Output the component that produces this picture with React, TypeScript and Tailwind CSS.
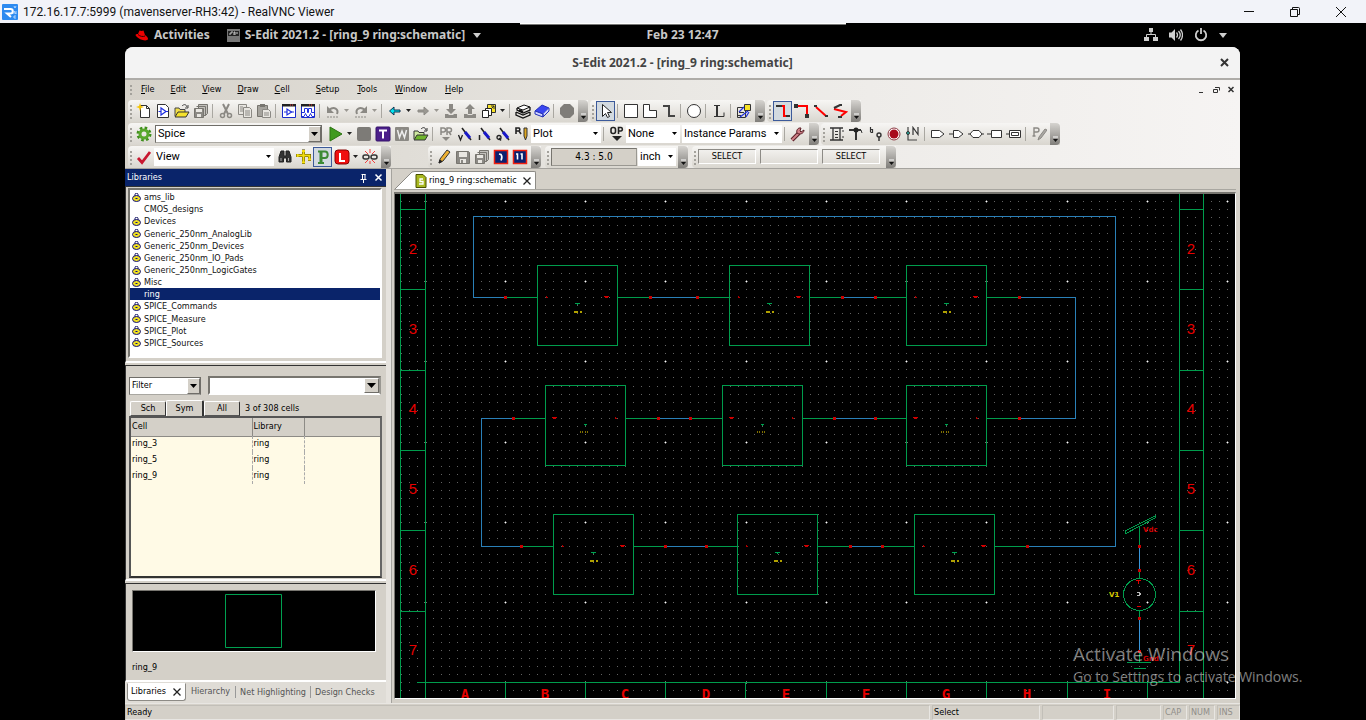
import React from "react";

const UI = "font-['DejaVu_Sans_Condensed','DejaVu_Sans','Noto_Sans',sans-serif] text-[9px]";

type Kids = { children?: React.ReactNode };

function Glyph({ children, size = 16 }: Kids & { size?: number }) {
  return (
    <svg width={size} height={size} viewBox="0 0 16 16" fill="none" stroke="#222" strokeWidth="1" aria-hidden="true" className="shrink-0">
      {children}
    </svg>
  );
}

/* ---------- toolbar icons ---------- */

const G = "#8b8984";

const page = (
  <>
    <path d="M4.5 2.5h6l3 3v9h-9z" fill="#fff" stroke="#333" />
    <path d="M10.5 2.5v3h3" stroke="#333" />
  </>
);

const icons: Record<string, React.ReactNode> = {
  new: (
    <>
      {page}
      <path d="M4 0l1 3 3 1-3 1-1 3-1-3-3-1 3-1z" fill="#f5c400" stroke="none" />
    </>
  ),
  view: (
    <>
      <path d="M2.500 1.500h8l3 3v10h-11z" fill="#fff" stroke="#333" />
      <path d="M6 5v7l5-3.500z" stroke="#2030e0" strokeWidth="1.200" />
      <path d="M3.500 8.500H6M11 8.500h2" stroke="#2030e0" strokeWidth="1.200" />
    </>
  ),
  open: (
    <>
      <path d="M1 13V5h4l1 1.500h5V9" fill="#f3e04a" stroke="#444" />
      <path d="M1 14l3-5h11l-3 5z" fill="#f5e22c" stroke="#333" />
      <path d="M8 3c2-2 4-2 5 1m1-2v3h-3" stroke="#444" />
    </>
  ),
  openGreen: (
    <>
      <path d="M1 13V5h4l1 1.500h5V9" fill="#cfe8a0" stroke="#333" />
      <path d="M1 14l3-5h11l-3 5z" fill="#6fb52c" stroke="#333" />
      <path d="M8 3c2-2 4-2 5 1m1-2v3h-3" stroke="#333" />
    </>
  ),
  save: (
    <>
      <path d="M1.500 2.500h12l1 1v11h-13z" fill={G} stroke="#77756f" />
      <path d="M4 3h8v5H4zM5 10h6v4H5z" fill="#e9e7e2" stroke="none" />
      <path d="M6 11h2v3H6z" fill={G} stroke="none" />
    </>
  ),
  saveAll: (
    <>
      <path d="M5.500 1.500h9v9l-2 2h-7z" fill="#c2c0bb" stroke="#77756f" />
      <path d="M3.500 3.500h9v9" stroke="#77756f" />
      <path d="M1.500 5.500h9v9h-9z" fill={G} stroke="#77756f" />
      <path d="M3 6h6v3H3zM4 11h4v3H4z" fill="#e9e7e2" stroke="none" />
    </>
  ),
  cut: (
    <>
      <path d="M5 1l5 10M11 1L6 11" stroke={G} strokeWidth="2" />
      <circle cx="4.500" cy="12.500" r="2" stroke={G} strokeWidth="1.500" />
      <circle cx="11.500" cy="12.500" r="2" stroke={G} strokeWidth="1.500" />
    </>
  ),
  copy: (
    <>
      <path d="M1.500 1.500h8v10h-8z" fill="#e8e6e1" stroke={G} />
      <path d="M6.500 4.500h6l2 2v8h-8z" fill="#e8e6e1" stroke={G} />
      <path d="M3 4h3M3 6h3M3 8h3M8 8h5M8 10h5M8 12h5" stroke={G} />
    </>
  ),
  paste: (
    <>
      <path d="M1.500 2.500h10v11h-10z" fill="#a5a39d" stroke="#77756f" />
      <path d="M4 1h5v3H4z" fill="#77756f" stroke="none" />
      <path d="M6.500 6.500h6l2 2v6h-8z" fill="#e8e6e1" stroke={G} />
      <path d="M8 10h5M8 12h5" stroke={G} />
    </>
  ),
  symView: (
    <>
      <path d="M1.500 1.500h13v13h-13z" fill="#fff" stroke="#1a2acc" />
      <path d="M1 1h14v2.500H1z" fill="#222" stroke="none" />
      <path d="M9 2h1M11 2h1" stroke="#f04040" />
      <path d="M6 6v6l4.500-3z" stroke="#2030e0" strokeWidth="1.200" />
      <path d="M3 9h3M10 9h3" stroke="#2030e0" strokeWidth="1.200" />
    </>
  ),
  wave: (
    <>
      <path d="M1.500 1.500h13v13h-13z" fill="#fff" stroke="#1a2acc" />
      <path d="M1 1h14v2.500H1z" fill="#222" stroke="none" />
      <path d="M9 2h1M11 2h1" stroke="#f04040" />
      <path d="M2 9.500h2.500v-4h3v4h1v-4h3v4H14" stroke="#2030e0" />
      <path d="M2 13.500h2l1.500-3 1.500 3h2l1.500-3 1.500 3h2" stroke="#2030e0" />
    </>
  ),
  undo: (
    <>
      <path d="M12 11c2-5-3-8-8-4" stroke={G} strokeWidth="2" />
      <path d="M2 3v7h7z" fill={G} stroke="none" />
      <path d="M2 14h12" stroke={G} strokeDasharray="2 1" />
    </>
  ),
  redo: (
    <>
      <path d="M4 11c-2-5 3-8 8-4" stroke={G} strokeWidth="2" />
      <path d="M14 3v7H7z" fill={G} stroke="none" />
      <path d="M2 14h12" stroke={G} strokeDasharray="2 1" />
    </>
  ),
  back: <path d="M2.500 8l4.500-4v3h6v2H7v3z" fill="#00e5f0" stroke="#103050" />,
  forward: <path d="M13.500 8L9 4v3H3v2h6v3z" fill="#9a9892" stroke={G} />,
  pushIn: (
    <>
      <path d="M6 1h4v5h3l-5 5-5-5h3z" fill={G} stroke="none" />
      <path d="M2 11h3l1 1h4l1-1h3v4H2z" fill={G} stroke="none" />
    </>
  ),
  popOut: (
    <>
      <path d="M6 11V6H3l5-5 5 5h-3v5z" fill={G} stroke="none" />
      <path d="M2 11h3l1 1h4l1-1h3v4H2z" fill={G} stroke="none" />
    </>
  ),
  windows: (
    <>
      <path d="M6.500 1.500h8v8h-8z" fill="#f7e227" stroke="#333" />
      <path d="M9 7l4-4M10 3h3v3" stroke="#333" />
      <path d="M4.500 5.500h6v7h-6z" fill="#fff" stroke="#222" />
      <path d="M1.500 7.500h6v7h-6z" fill="#fff" stroke="#222" />
    </>
  ),
  books: (
    <>
      <path d="M2 5l7-3 6 2-7 3z" fill="#fff" stroke="#111" />
      <path d="M2 5v2l6 3 7-3V4M1 9l7 3 7-3M1 9v3l7 3 7-3V9" stroke="#111" strokeWidth="1.300" />
      <path d="M4 7l4 2" stroke="#111" strokeWidth="2" />
    </>
  ),
  book: (
    <>
      <path d="M1 8l7-6 7 3-6 6z" fill="#3a46f0" stroke="#2330b8" />
      <path d="M1 8v3l8 3v-3zM9 11v3l6-6V5" fill="#cfd3ff" stroke="#2330b8" />
    </>
  ),
  octagon: <path d="M5 1h6l4 4v6l-4 4H5l-4-4V5z" fill="#7f7d79" stroke="none" />,
  pointer: <path d="M4.500 1.500v12l3-3 2 4 2-1-2-4h4z" fill="#fff" stroke="#222" />,
  rect: <path d="M1.500 1.500h13v13h-13z" fill="#fff" stroke="#333" />,
  polygon: <path d="M1.500 1.500h6v6h7v7h-13z" fill="#fff" stroke="#333" />,
  wire: <path d="M2 3h6v10h6" stroke="#444" strokeWidth="2" />,
  circle: <circle cx="8" cy="8" r="6.500" fill="#fff" stroke="#333" />,
  label: (
    <>
      <path d="M3 2.500h6M3 13.500h10v-4" stroke="#333" />
      <path d="M6 2v12" stroke="#333" strokeWidth="2" />
    </>
  ),
  instance: (
    <>
      <path d="M1.500 4.500h8v10h-8z" stroke="#333" />
      <path d="M3 9.500h5M2 12.500h3" stroke="#333" />
      <path d="M8.500 1.500h6v6h-6z" fill="#f7e227" stroke="#333" />
      <path d="M3 9l5-5M4 14l8-6M10 14l3-5" stroke="#2030e0" strokeWidth="1.200" />
    </>
  ),
  wire90: (
    <>
      <path d="M1 3h7" stroke="#333" strokeWidth="2" />
      <path d="M7 3h2v10h3" stroke="#f00" strokeWidth="2" />
      <path d="M11 13h4" stroke="#333" strokeWidth="2" />
    </>
  ),
  wireCorner: (
    <>
      <path d="M1 3h12v9" stroke="#f00" strokeWidth="2" />
      <path d="M0 1h4v4H0zM11 11h4v4h-4z" fill="#333" stroke="none" />
    </>
  ),
  wire45: (
    <>
      <path d="M3 4l10 9" stroke="#f00" strokeWidth="2" />
      <path d="M1 3h3M12 13h3" stroke="#333" strokeWidth="2" />
    </>
  ),
  wireAny: (
    <>
      <path d="M2 6l12 3-5 4" stroke="#f00" strokeWidth="2" />
      <path d="M2 5l6-3h2M6 14h4" stroke="#333" strokeWidth="2" />
    </>
  ),
  gear: (
    <>
      <circle cx="8" cy="8" r="5.500" stroke="#3f8f1c" strokeWidth="4" strokeDasharray="2.300 2" />
      <circle cx="8" cy="8" r="4" stroke="#58a82c" strokeWidth="3" />
    </>
  ),
  play: <path d="M2 1l12 7-12 7z" fill="#3f9a1e" stroke="#2c7412" />,
  stop: <rect x="1" y="1" width="14" height="14" rx="2" fill="#7d7b77" stroke="none" />,
  T: (
    <>
      <rect x="1" y="1" width="14" height="14" rx="1" fill="#4b1f8a" stroke="#34126a" />
      <path d="M4 4.500h8M8 4.500v8" stroke="#fff" strokeWidth="2" />
    </>
  ),
  W: (
    <>
      <rect x="1" y="1" width="14" height="14" rx="1" fill="#8b8984" stroke="none" />
      <path d="M3.500 4l2 7.500L8 5l2.500 6.500 2-7.500" stroke="#eee" strokeWidth="1.500" />
    </>
  ),
  PR: (
    <>
      <path d="M3 9V2h2.500a1.800 1.800 0 010 4H3M9 9V2h2.500a1.800 1.800 0 010 4H9m2 0l2 3" stroke={G} strokeWidth="1.500" />
      <path d="M4 11h8l-4 4z" fill={G} stroke="none" />
    </>
  ),
  probeV: (
    <>
      <path d="M5 2l9 12" stroke="#222" strokeWidth="1.500" />
      <path d="M8 6l5 6" stroke="#1818c8" strokeWidth="3" />
      <path d="M1.500 9l2 5 2-5" stroke="#222" strokeWidth="1.300" />
    </>
  ),
  probeI: (
    <>
      <path d="M5 2l9 12" stroke="#222" strokeWidth="1.500" />
      <path d="M8 6l5 6" stroke="#1818c8" strokeWidth="3" />
      <path d="M3.500 9v5" stroke="#222" strokeWidth="1.500" />
    </>
  ),
  probeQ: (
    <>
      <path d="M5 2l9 12" stroke="#222" strokeWidth="1.500" />
      <path d="M8 6l5 6" stroke="#1818c8" strokeWidth="3" />
      <circle cx="4" cy="11.500" r="2" stroke="#222" strokeWidth="1.300" />
      <path d="M4 12l2 2.500" stroke="#222" strokeWidth="1.300" />
    </>
  ),
  probeR: (
    <>
      <path d="M2 8V2h3a1.800 1.800 0 010 3H2m3 0l2 3" stroke="#222" strokeWidth="1.600" />
      <path d="M10 2h3v8l-1.500 4L10 10z" fill="#e0a820" stroke="#333" />
    </>
  ),
  OP: (
    <>
      <rect x="2" y="1.500" width="4.500" height="6" rx="2" stroke="#222" strokeWidth="1.600" />
      <path d="M9.500 8V1.500H12a1.800 1.800 0 010 3.500H9.500" stroke="#222" strokeWidth="1.600" />
      <path d="M3 10h10l-5 5z" fill="#222" stroke="none" />
    </>
  ),
  wrench: (
    <>
      <path d="M2 14l7-7" stroke="#5a2028" strokeWidth="4" />
      <path d="M2 14l7-7" stroke="#d08088" strokeWidth="2" />
      <path d="M14 4l-3 2-1-1 1-3c-3-.5-5 2-4 5 2 2 7 1 7-3z" fill="#d08088" stroke="#5a2028" />
    </>
  ),
  scroll: (
    <>
      <path d="M1 2h13M1 14h13" stroke="#333" strokeWidth="1.600" />
      <path d="M4 2v12M11 2v12" stroke="#333" strokeWidth="1.300" />
      <path d="M6 5.500h3M6 8.500h3M6 11.500h3M14 4v2M14 10v2" stroke="#333" />
    </>
  ),
  node: (
    <>
      <path d="M1 4h12" stroke="#333" strokeWidth="2" />
      <path d="M8 2v12" stroke="#333" strokeWidth="2" />
      <path d="M13 4l1 3" stroke="#333" />
      <circle cx="8" cy="4" r="2.500" fill="#222" stroke="none" />
    </>
  ),
  pins: (
    <>
      <path d="M3.500 1v5M3.500 3.500h2v3h-2" stroke="#333" strokeWidth="1.200" />
      <circle cx="12" cy="9" r="2" stroke="#333" strokeWidth="1.400" />
      <path d="M12 11v4" stroke="#333" strokeWidth="1.500" />
    </>
  ),
  record: (
    <>
      <circle cx="8" cy="8" r="6" fill="#fff" stroke="#8d3a44" />
      <circle cx="8" cy="8" r="4.500" fill="#a8081c" stroke="none" />
    </>
  ),
  net: (
    <>
      <path d="M3 1v13h9" stroke="#444" strokeWidth="1.200" />
      <circle cx="3" cy="7" r="1.500" fill="#20b0a0" stroke="#333" />
      <path d="M8 9V1.500l5 7V1" stroke="#333" strokeWidth="1.200" />
    </>
  ),
  portIn: <path d="M1.500 4.500h8l4.500 3.500-4.500 3.500h-8z" fill="#fff" stroke="#333" />,
  portOut: <path d="M0 8h4M4.500 4.500h5L14 8l-4.500 3.500h-5z" fill="#fff" stroke="#333" />,
  portBi: <path d="M0 8h2l3-3.500h6L14 8h2M14 8l-3 3.500H5L2 8" fill="#fff" stroke="#333" />,
  portOther: <path d="M0 8h4M4.500 4.500h10v7h-10z" fill="#fff" stroke="#333" />,
  portGlobal: (
    <>
      <path d="M0 8h3M3.500 4.500h11v7h-11z" fill="#fff" stroke="#333" />
      <path d="M5.500 6.500h7v3h-7z" stroke="#333" />
    </>
  ),
  param: (
    <>
      <path d="M3 10V2h3a2 2 0 010 4H3M1.500 10h3" stroke={G} strokeWidth="1.400" />
      <path d="M7 14l1-3 6-8 2 1-6 8z" fill="#aaa8a3" stroke={G} />
    </>
  ),
  check: <path d="M2 9l4 4.500L14 3" stroke="#c81830" strokeWidth="2.800" />,
  find: (
    <>
      <path d="M4 2h3v5h2V2h3l2 6v5H9.500V9h-3v4H2V8z" fill="#333" stroke="#222" />
      <path d="M4 9v3M11.500 9v3" stroke="#aaa" />
    </>
  ),
  hier: (
    <>
      <path d="M7.500 1v13M2 6.500h11.500v4M6 13.500h3M12 10.500h3M1.500 5v3M6 2h3" stroke="#4a4200" strokeWidth="3" />
      <path d="M7.500 1v13M2 6.500h11.500v4M6 13.500h3M12 10.500h3M1.500 5v3M6 2h3" stroke="#f2dd10" strokeWidth="2" />
    </>
  ),
  P: (
    <>
      <path d="M6 14V2" stroke="#3c8a34" strokeWidth="3" />
      <path d="M3 2.500h7a2.500 3 0 010 6.500H7M3 14h6" stroke="#3c8a34" strokeWidth="2" />
    </>
  ),
  L: (
    <>
      <rect x="1" y="1" width="14" height="14" rx="3" fill="#f01010" stroke="#8a0000" />
      <path d="M6 4v8h5" stroke="#fff" strokeWidth="2" />
    </>
  ),
  chain: (
    <>
      <path d="M3 2l3 3M13 2l-3 3M8 0v4M3 14l3-3M13 14l-3-3M8 15v-3" stroke="#f04040" />
      <rect x="1" y="6" width="6" height="4" rx="2" stroke="#333" strokeWidth="1.500" />
      <rect x="9" y="6" width="6" height="4" rx="2" stroke="#333" strokeWidth="1.500" />
    </>
  ),
  pencil: (
    <>
      <path d="M3 14l1-4 7-9 3 2-7 9z" fill="#eeb030" stroke="#333" />
      <path d="M3 14l1-3 2 1.500z" fill="#222" />
    </>
  ),
  one: (
    <>
      <rect x="1.500" y="1.500" width="13" height="13" fill="#0a2070" stroke="#f02010" strokeWidth="1.500" />
      <path d="M6 5l2 .5c1.500 2 1 4 0 6" stroke="#fff" strokeWidth="1.600" />
    </>
  ),
  two: (
    <>
      <rect x="1.500" y="1.500" width="13" height="13" fill="#0a2070" stroke="#f02010" strokeWidth="1.500" />
      <path d="M4 5h1.500v5.500M8.500 5H10v5.500" stroke="#fff" strokeWidth="1.600" />
    </>
  ),
};

/* ---------- toolbar parts ---------- */

function Tool({ name, label, on }: { name: string; label?: string; on?: boolean }) {
  return (
    <button
      type="button"
      aria-label={label ?? name}
      aria-pressed={on}
      className={`flex h-5 w-[19px] shrink-0 items-center justify-center ${on ? "border border-[#3c5a9a] bg-[#d3dae0]" : ""}`}
    >
      <Glyph>{icons[name]}</Glyph>
    </button>
  );
}

function More({ dim }: { dim?: boolean }) {
  return (
    <button type="button" aria-label="More options" className="flex h-5 w-[9px] shrink-0 items-center justify-center">
      <svg width="5" height="3" aria-hidden="true">
        <path d="M0 0h5L2.500 3z" fill={dim ? "#9a9892" : "#222"} />
      </svg>
    </button>
  );
}

const Sep = () => <span className="mr-[3px] ml-[2px] h-[14px] w-px shrink-0 bg-[#a9a7a1]" />;

function Toolbar({ children, label }: Kids & { label: string }) {
  return (
    <div role="toolbar" aria-label={label} className="flex h-[22px] shrink-0 items-center rounded-l-sm bg-linear-to-b from-[#f7f6f4] to-[#d9d6cf]">
      <svg width="6" height="16" aria-hidden="true" className="shrink-0">
        <path d="M3 2v2M3 6v2M3 10v2M3 14v2" stroke="#a4a29c" strokeWidth="2" />
      </svg>
      {children}
      <span className="ml-[2px] flex h-[22px] w-[10px] shrink-0 items-end justify-center rounded-r-sm bg-linear-to-b from-[#d6d4d0] to-[#807e7a] pb-[3px]">
        <svg width="7" height="6" aria-hidden="true">
          <path d="M1 1h5" stroke="#fff" />
          <path d="M1 3h5l-2.500 3z" fill="#111" />
        </svg>
      </span>
    </div>
  );
}

function Pick({ label, value, width, sunken, big }: { label: string; value: string; width: string; sunken?: boolean; big?: boolean }) {
  return (
    <span className={`grid h-[18px] shrink-0 items-center bg-white ${width} ${sunken ? "border border-t-[#6f6d68] border-l-[#6f6d68] border-r-[#6f6d68] border-b-[#a9a7a1]" : ""}`}>
      <select
        aria-label={label}
        className={`col-start-1 row-start-1 h-4 w-full appearance-none bg-transparent pl-[2px] text-black outline-none ${big ? "font-['Roboto',sans-serif] text-[11px]" : "text-[9px]"}`}
      >
        <option>{value}</option>
      </select>
      <span
        className={`pointer-events-none col-start-1 row-start-1 flex h-4 items-center justify-center justify-self-end ${
          sunken ? "w-[13px] border border-t-white border-l-white border-r-[#6f6d68] border-b-[#6f6d68] bg-[#d4d0c8]" : "w-[11px]"
        }`}
      >
        <svg width="7" height="4" aria-hidden="true">
          {sunken ? <path d="M0 0h7L3.500 4z" fill="#000" /> : <path d="M1 0h5L3.500 3z" fill="#000" />}
        </svg>
      </span>
    </span>
  );
}

function Field({ text, width }: { text: string; width: string }) {
  return (
    <span className={`flex h-[15px] shrink-0 items-center justify-center border border-t-[#8d8b86] border-l-[#8d8b86] border-r-white border-b-white text-black ${width}`}>{text}</span>
  );
}

/* ---------- window frame ---------- */

function ViewerTitle() {
  return (
    <header className="flex h-[23px] shrink-0 items-center bg-[#f2f3f9] pr-[2px] pl-[2px] font-['Roboto',sans-serif] text-xs text-[#111]">
      <svg width="16" height="16" viewBox="0 0 16 16" aria-hidden="true">
        <rect width="16" height="16" rx="1" fill="#2e8bf0" />
        <path d="M2 5h6.500a2.200 2.200 0 010 4.500H5l4 3.500" fill="none" stroke="#fff" strokeWidth="2" />
        <path d="M12 2l1 2 1-2M12 10V7l2 3V7M14 12h-2v2h2" fill="none" stroke="#cfe4ff" strokeWidth="0.800" />
      </svg>
      <h1 className="ml-[5px] flex-1">172.16.17.7:5999 (mavenserver-RH3:42) - RealVNC Viewer</h1>
      <div className="flex">
        {[
          ["Minimize", "M1 5.500h10"],
          ["Restore", "M1.500 3.500h7v7h-7zM3.500 3.500v-2h6a1 1 0 011 1v6h-2"],
          ["Close", "M1 1l10 10M11 1L1 11"],
        ].map(([n, d]) => (
          <button key={n} type="button" aria-label={n} className="flex h-[21px] w-[46px] items-center justify-center">
            <svg width="12" height="12" fill="none" stroke="#111" aria-hidden="true">
              <path d={d} />
            </svg>
          </button>
        ))}
      </div>
    </header>
  );
}

function DesktopBar() {
  return (
    <div className="grid h-6 shrink-0 grid-cols-[1fr_auto_1fr] items-center bg-black font-['Noto_Sans',sans-serif] text-xs font-bold text-[#c8c8c8]">
      <div className="flex items-center">
        <button type="button" className="ml-[10px] flex items-center">
          <svg width="13" height="11" viewBox="0 0 13 11" aria-hidden="true">
            <path d="M3 4l1.500-3.500 2 .5 2-.5 1.500 4.500c2 1 3 3 3 4-1 3-9 1-12-3C0 4.500 1 4 3 4z" fill="#e00" />
            <path d="M3 4.500c2 2 5 2.500 7 1.500" stroke="#300" fill="none" />
          </svg>
          <span className="ml-[6px]">Activities</span>
        </button>
        <button type="button" className="ml-[17px] flex items-center">
          <svg width="13" height="13" viewBox="0 0 13 13" aria-hidden="true">
            <rect width="13" height="13" fill="#777" />
            <path d="M1 2h11v5H1z" fill="#222" />
            <path d="M2 5h2V3h2M7 6V3h1v3M10 3v2" stroke="#ccc" fill="none" />
          </svg>
          <span className="mr-[8px] ml-[5px]">S-Edit 2021.2 - [ring_9 ring:schematic]</span>
          <svg width="8" height="5" aria-hidden="true">
            <path d="M0 0h8L4 5z" fill="#cfcfcf" />
          </svg>
        </button>
      </div>
      <time>Feb 23 12:47</time>
      <div className="flex items-center justify-end gap-[11px] pr-[13px]">
        <svg width="14" height="14" viewBox="0 0 14 14" aria-hidden="true">
          <path d="M5 0h4v4H5zM0 9h5v4H0zM9 9h5v4H9z" fill="#cfcfcf" />
          <path d="M7 4v3M2.500 9V6.500h9V9" stroke="#cfcfcf" fill="none" />
        </svg>
        <svg width="14" height="14" viewBox="0 0 14 14" aria-hidden="true">
          <path d="M0 4.500h2.500L6 1v12L2.500 9.500H0z" fill="#cfcfcf" />
          <path d="M7.500 4.500q2 2.500 0 5M9.500 3q3.500 4 0 8M11.500 1.500q4 5.500 0 11" stroke="#cfcfcf" strokeWidth="1.300" fill="none" />
        </svg>
        <svg width="14" height="14" viewBox="0 0 14 14" aria-hidden="true">
          <path d="M4.500 2.500a5.200 5.200 0 105 0M7 0v6" stroke="#cfcfcf" strokeWidth="1.800" fill="none" />
        </svg>
        <svg width="8" height="5" aria-hidden="true">
          <path d="M0 0h8L4 5z" fill="#cfcfcf" />
        </svg>
      </div>
    </div>
  );
}

const menus = ["File", "Edit", "View", "Draw", "Cell", "Setup", "Tools", "Window", "Help"];

function MenuBar() {
  return (
    <nav className="flex h-[19px] shrink-0 items-center pl-[3px]">
      <svg width="6" height="14" aria-hidden="true">
        <path d="M3 2v2M3 6v2M3 10v2" stroke="#a4a29c" strokeWidth="2" />
      </svg>
      <div className="flex flex-1 gap-4 pl-[7px]">
        {menus.map((m) => (
          <button key={m} type="button" className={m === "Cell" ? "mr-[10px]" : m === "Tools" || m === "Window" || m === "Setup" ? "mr-[2px]" : ""}>
            <span className="underline">{m[0]}</span>
            {m.slice(1)}
          </button>
        ))}
      </div>
      <div className="flex gap-[5px] pr-[4px]">
        {[
          ["Minimize document", "M2 7.500h4"],
          ["Restore document", "M1.500 4.500h4v3h-4zM3 2.500h4.500v3"],
          ["Close document", "M1.500 2l5 5M6.500 2l-5 5"],
        ].map(([n, d], i) => (
          <button key={n} type="button" aria-label={n} className="flex w-[10px] justify-center">
            <svg width="9" height="9" fill="none" stroke="#333" strokeWidth={i === 2 ? 1.5 : 1} aria-hidden="true">
              <path d={d} />
            </svg>
          </button>
        ))}
      </div>
    </nav>
  );
}

function Toolbars() {
  return (
    <div className="flex shrink-0 flex-col border-b border-[#a5a39e] pl-[3px]">
      <div className="flex h-[23px] items-center gap-[2px]">
        <Toolbar label="Standard">
          <Tool name="new" /><Tool name="view" /><Tool name="open" /><Tool name="saveAll" />
          <Sep />
          <Tool name="cut" /><Tool name="copy" /><Tool name="paste" />
          <Sep />
          <Tool name="symView" /><Tool name="wave" />
          <Sep />
          <Tool name="undo" /><More dim /><Tool name="redo" /><More dim />
          <Sep />
          <Tool name="back" /><More /><Tool name="forward" /><More dim />
          <Tool name="pushIn" /><Tool name="popOut" /><Tool name="windows" /><More />
          <Sep />
          <Tool name="books" /><Tool name="book" />
          <Sep />
          <Tool name="octagon" label="stop" />
        </Toolbar>
        <Toolbar label="Draw">
          <Tool name="pointer" on />
          <Sep />
          <Tool name="rect" /><Tool name="polygon" /><Tool name="wire" />
          <Sep />
          <Tool name="circle" />
          <Sep />
          <Tool name="label" />
          <Sep />
          <Tool name="instance" />
        </Toolbar>
        <Toolbar label="Wire angle">
          <Tool name="wire90" on /><Tool name="wireCorner" /><Tool name="wire45" /><Tool name="wireAny" />
        </Toolbar>
      </div>
      <div className="flex h-[23px] items-center gap-[2px]">
        <Toolbar label="Simulation">
          <Tool name="gear" />
          <span className="flex px-[2px]">
            <Pick label="Simulator" value="Spice" width="w-[167px]" sunken big />
          </span>
          <span className="ml-[2px] flex">
            <Tool name="play" />
          </span>
          <More /><Tool name="stop" /><Tool name="T" /><Tool name="W" /><Tool name="openGreen" />
          <Sep />
          <Tool name="PR" /><Tool name="probeV" /><Tool name="probeI" /><Tool name="probeQ" /><Tool name="probeR" />
          <Pick label="Probe target" value="Plot" width="w-[70px]" big />
          <Sep />
          <Tool name="OP" />
          <Pick label="Operating point" value="None" width="w-[54px]" big />
          <span className="ml-[2px] flex">
            <Pick label="Annotation" value="Instance Params" width="w-[100px]" big />
          </span>
          <Sep />
          <Tool name="wrench" />
        </Toolbar>
        <Toolbar label="Ports">
          <Tool name="scroll" /><Tool name="node" /><Tool name="pins" /><Tool name="record" /><Tool name="net" />
          <Sep />
          <Tool name="portIn" /><Tool name="portOut" /><Tool name="portBi" /><Tool name="portOther" /><Tool name="portGlobal" />
          <Sep />
          <Tool name="param" />
        </Toolbar>
      </div>
      <div className="flex h-[23px] items-center gap-1">
        <Toolbar label="View">
          <Tool name="check" />
          <span className="flex px-px">
            <Pick label="View mode" value="View" width="w-[120px]" big />
          </span>
          <Tool name="find" /><Tool name="hier" /><Tool name="P" on /><Tool name="L" /><More /><Tool name="chain" />
        </Toolbar>
        <span className="ml-[33px] flex">
          <Toolbar label="Edit">
            <Tool name="pencil" /><Tool name="save" /><Tool name="saveAll" label="save all" /><Tool name="one" /><Tool name="two" />
          </Toolbar>
        </span>
        <Toolbar label="Coordinates">
          <span className="flex h-[18px] w-[86px] shrink-0 items-center justify-center border border-t-[#77756f] border-l-[#77756f] border-r-[#9a9892] border-b-[#9a9892] bg-[#d4d0c8] text-[10px]">
            4.3 : 5.0
          </span>
          <span className="ml-px flex">
            <Pick label="Units" value="inch" width="w-[38px]" big />
          </span>
        </Toolbar>
        <Toolbar label="Mouse buttons">
          <span className="flex gap-[4px] pr-[4px]">
            <Field text="SELECT" width="w-[58px]" />
            <Field text="" width="w-[58px]" />
            <Field text="SELECT" width="w-[58px]" />
          </span>
        </Toolbar>
      </div>
    </div>
  );
}

/* ---------- libraries dock ---------- */

const libraries: [string, boolean][] = [
  ["ams_lib", true],
  ["CMOS_designs", false],
  ["Devices", true],
  ["Generic_250nm_AnalogLib", true],
  ["Generic_250nm_Devices", true],
  ["Generic_250nm_IO_Pads", true],
  ["Generic_250nm_LogicGates", true],
  ["Misc", true],
  ["ring", false],
  ["SPICE_Commands", true],
  ["SPICE_Measure", true],
  ["SPICE_Plot", true],
  ["SPICE_Sources", true],
];

const Lock = () => (
  <svg width="9" height="9" viewBox="0 0 9 9" aria-hidden="true" className="block">
    <path d="M3 3V1.500a1.500 1.200 0 013 0V3" stroke="#101060" fill="none" />
    <ellipse cx="4.500" cy="5.500" rx="4" ry="3" fill="#f0e020" stroke="#101080" />
    <path d="M3.500 5.500h2" stroke="#101080" />
  </svg>
);

const sunk = "border border-t-[#77756f] border-l-[#77756f] border-r-white border-b-white";
const panel = "border-t border-l border-[#333] border-b-2 border-b-white";

function Dock() {
  return (
    <aside className="flex w-[261px] shrink-0 flex-col bg-[#d4d0c8]">
      <div className="flex h-[17px] shrink-0 items-center bg-[#0a246a] pr-[3px] pl-[2px] text-white">
        <h2 className="flex-1">Libraries</h2>
        <button type="button" aria-label="Pin panel" className="mr-[6px]">
          <svg width="9" height="10" fill="none" stroke="#fff" aria-hidden="true">
            <path d="M3.500 1v5M6 1v5M2.500 1.500h4M1.500 6.500h6M4.500 7v3" />
          </svg>
        </button>
        <button type="button" aria-label="Close panel">
          <svg width="9" height="9" stroke="#fff" strokeWidth="1.500" aria-hidden="true">
            <path d="M1.500 1.500l6 6M7.500 1.500l-6 6" />
          </svg>
        </button>
      </div>

      <section className={`mb-[2px] flex h-[177px] shrink-0 flex-col pt-px pr-[4px] pb-[3px] pl-[2px] ${panel}`}>
        <ul role="listbox" aria-label="Libraries" className={`flex flex-1 flex-col bg-white pt-px pb-[7px] ${sunk} border-2`}>
          {libraries.map(([name, locked]) => (
            <li
              key={name}
              role="option"
              aria-selected={name === "ring"}
              className={`flex flex-1 items-center gap-[3px] pl-[2px] leading-3 ${name === "ring" ? "bg-[#0a246a] text-white" : "text-[#111]"}`}
            >
              <span className="w-[9px]">{locked && <Lock />}</span>
              {name}
            </li>
          ))}
        </ul>
      </section>

      <section className={`mb-[2px] flex flex-1 flex-col pt-[10px] pr-[4px] pb-px pl-[3px] ${panel}`}>
        <div className="flex items-center gap-[7px] pr-px">
          <Pick label="Filter type" value="Filter" width="w-[72px]" sunken />
          <div className="flex h-[19px] flex-1 border-2 border-t-[#77756f] border-l-[#77756f] border-r-[#9a9892] border-b-white bg-white">
            <input type="text" aria-label="Filter text" className="min-w-0 flex-1 bg-transparent px-1 outline-none" />
            <button type="button" aria-label="Show filters" className="flex w-[15px] items-center justify-center border border-t-white border-l-white border-r-[#6f6d68] border-b-[#6f6d68] bg-[#d4d0c8]">
              <svg width="9" height="5" aria-hidden="true">
                <path d="M0 0h9L4.500 5z" fill="#000" />
              </svg>
            </button>
          </div>
        </div>
        <div className="mt-[5px] flex h-4 items-end pl-px" role="tablist">
          {["Sch", "Sym", "All"].map((t) => (
            <button
              key={t}
              type="button"
              role="tab"
              aria-selected={t === "Sym"}
              className={`rounded-t-[2px] border-t border-l border-t-white border-l-white border-r-[#333] ${
                t === "Sym" ? "h-4 w-[38px] border-r-2" : "h-[15px] w-[36px] border-r border-b border-b-[#555]"
              }`}
            >
              {t}
            </button>
          ))}
          <span className="pl-[5px] leading-4">3 of 308 cells</span>
        </div>
        <div className="flex-1 border-2 border-t-[#555] border-l-[#555] border-r-[#666] border-b-[#333] bg-[#fffae6]">
          <table className="w-full table-fixed border-collapse text-left">
            <thead>
              <tr className="h-[18px] bg-[#d4d0c8] shadow-[0_1px_0_#8d8b86]">
                <th className="w-[121px] border-r border-[#8d8b86] pl-px font-normal">Cell</th>
                <th className="w-[52px] border-r border-[#8d8b86] pl-px font-normal">Library</th>
                <th aria-label="Other" />
              </tr>
            </thead>
            <tbody>
              {["ring_3", "ring_5", "ring_9"].map((c) => (
                <tr key={c} className="h-4">
                  <td className="border-r border-dashed border-[#aaa] pl-px">{c}</td>
                  <td className="border-r border-dashed border-[#aaa] pl-px">ring</td>
                  <td />
                </tr>
              ))}
            </tbody>
          </table>
        </div>
      </section>

      <section className={`flex h-[99px] shrink-0 flex-col pt-[6px] pl-[6px] ${panel}`}>
        <div className={`mr-[10px] flex h-[62px] items-center justify-center bg-black ${sunk}`}>
          <svg width="58" height="56" aria-hidden="true">
            <path d="M.5 1.500h56v53H.5z" stroke="#00a050" fill="none" />
          </svg>
        </div>
        <p className="mt-[9px]">ring_9</p>
      </section>

      <div role="tablist" className="flex h-[21px] shrink-0 items-center bg-[#dfdcd6] pb-[2px] pl-[2px] whitespace-nowrap text-[#555]">
        <div className="flex h-[18px] items-center gap-[7px] rounded-b-[3px] border border-[#8d8b86] border-t-white bg-white pr-[4px] pl-[3px] text-black">
          <button type="button" role="tab" aria-selected>Libraries</button>
          <button type="button" aria-label="Close Libraries">
            <svg width="8" height="8" stroke="#222" strokeWidth="1.300" aria-hidden="true">
              <path d="M.5.5l7 7M7.500.5l-7 7" />
            </svg>
          </button>
        </div>
        <button type="button" role="tab" aria-selected={false} className="px-[5px]">Hierarchy</button>
        <button type="button" role="tab" aria-selected={false} className="border-l border-[#999] px-[4px] leading-3">Net Highlighting</button>
        <button type="button" role="tab" aria-selected={false} className="border-l border-[#999] px-[4px] leading-3">Design Checks</button>
      </div>
    </aside>
  );
}

/* ---------- schematic ---------- */

const STEP = 8.022;
const ORIGIN = { x: 505, y: 201 };

function eachDot(major: boolean, draw: (x: number, y: number) => string) {
  let d = "";
  for (let j = 0; j < 63; j++) {
    for (let i = -13; i < 92; i++) {
      if ((i % 10 === 0 && j % 10 === 0) !== major) continue;
      d += draw(Math.round(ORIGIN.x + i * STEP), Math.round(ORIGIN.y + j * STEP));
    }
  }
  return d;
}

const minorDots = eachDot(false, (x, y) => `M${x} ${y}h1v1h-1z`);
const majorArms = eachDot(true, (x, y) => `M${x - 1} ${y}h3v1h-3zM${x} ${y - 1}h1v3h-1z`);
const majorDots = eachDot(true, (x, y) => `M${x} ${y}h1v1h-1z`);

const blocks: { x: number; y: number; flip?: boolean }[] = [
  { x: 537, y: 265 }, { x: 729, y: 265 }, { x: 906, y: 265 },
  { x: 545, y: 385, flip: true }, { x: 722, y: 385, flip: true }, { x: 906, y: 385, flip: true },
  { x: 553, y: 514 }, { x: 737, y: 514 }, { x: 914, y: 514 },
];

const leads: [number, number, number][] = [
  [505, 537, 297], [618, 650, 297], [697, 729, 297], [810, 842, 297], [875, 906, 297], [987, 1019, 297],
  [513, 545, 418], [626, 658, 418], [690, 722, 418], [803, 834, 418], [875, 906, 418], [987, 1019, 418],
  [521, 553, 546], [634, 665, 546], [706, 737, 546], [818, 850, 546], [882, 914, 546], [995, 1027, 546],
];

const joints: [number, number][] = [
  [505, 297], [650, 297], [697, 297], [842, 297], [875, 297], [1019, 297],
  [513, 418], [658, 418], [690, 418], [834, 418], [875, 418], [1019, 418],
  [521, 546], [665, 546], [706, 546], [850, 546], [882, 546], [1027, 546],
  [1139, 546], [1139, 570], [1139, 618], [1139, 651],
];

const GREEN = "#009c4c";
const BLUE = "#2a80b8";
const rowEdges = [209, 289, 370, 450, 530, 611];
const colEdges = [505, 585, 665, 745, 826, 906, 986, 1067, 1147];
const numberRows = [254, 334, 414, 494, 575, 655];

function Schematic() {
  return (
    <svg role="img" aria-label="ring_9 schematic" className="h-full w-full bg-black" shapeRendering="crispEdges">
      <g transform="translate(-395 -194)">
        <path d={minorDots} fill="#626262" />
        <path d={majorArms} fill="#707070" />
        <path d={majorDots} fill="#fff" />
        <path
          fill="none"
          stroke={GREEN}
          d={
            "M400.500 190V720M425.500 190V720M1179.500 190V682M1203.500 190V720M417 682.500H1180" +
            rowEdges.map((y) => `M400 ${y}.5H425M1179 ${y}.5H1203`).join("") +
            colEdges.map((x) => `M${x}.5 682V720`).join("")
          }
        />
        <g fill="#e80000" fontFamily="'Liberation Sans',sans-serif" fontSize="15" textAnchor="middle">
          {numberRows.map((y, i) => (
            <React.Fragment key={y}>
              <text x="413" y={y}>{i + 2}</text>
              <text x="1191" y={y}>{i + 2}</text>
            </React.Fragment>
          ))}
        </g>
        <g fill="#e80000" fontFamily="'DejaVu Sans Mono','Liberation Mono',monospace" fontSize="14" fontWeight="bold" textAnchor="middle">
          {"ABCDEFGHI".split("").map((c, i) => (
            <text key={c} x={Math.round(465 + i * 80.22)} y="699">{c}</text>
          ))}
        </g>
        <path
          fill="none"
          stroke={BLUE}
          d="M505 297.500H473.500V216.500H1115.500V546.500H1027M650 297.500H697M842 297.500H875M1019 297.500H1075.500V418.500H1019M875 418.500H834M690 418.500H658M513 418.500H481.500V546.500H521M665 546.500H706M850 546.500H882"
        />
        <path fill="none" stroke={GREEN} d={leads.map(([a, b, y]) => `M${a} ${y}.5H${b}`).join("")} />
        {blocks.map(({ x, y, flip }) => (
          <g key={`${x}-${y}`}>
            <rect x={x + 0.5} y={y + 0.5} width="80" height="80" fill="none" stroke={GREEN} />
            <path d={flip ? `M${x + 7} ${y + 32}h5v1h-1v1h-3v-1h-1z` : `M${x + 67} ${y + 31}h5v1h-1v1h-3v-1h-1z`} fill="#d00000" />
            <path d={flip ? `M${x + 70} ${y + 32}h1v1h1v1h-2z` : `M${x + 9} ${y + 31}h1v1h1v1h-2z`} fill="#b00000" />
            <path d={flip ? `M${x + 39} ${y + 39}h3v1h-1v1h-1v-1h-1z` : `M${x + 38} ${y + 38}h5v1h-2v1h-1v-1h-2z`} fill="#00a050" />
            <path
              d={flip ? `M${x + 35} ${y + 46}h1v2h-1zM${x + 37} ${y + 46}h1v2h-1zM${x + 40} ${y + 46}h1v2h-1zM${x + 42} ${y + 46}h1v2h-1z` : `M${x + 37} ${y + 46}h4v2h-4zM${x + 43} ${y + 46}h2v2h-2z`}
              fill={flip ? "#807000" : "#b0a000"}
            />
          </g>
        ))}
        <g fill="none" stroke={GREEN}>
          <path d="M1125 531l30-15v2l-30 16zM1139.500 526V546M1139.500 570V578M1139.500 610V618M1139.500 651V662M1127 662.500H1151M1134 668.500H1146M1138 674.500H1141" />
          <circle cx="1139.500" cy="594.500" r="16" />
        </g>
        <path d="M1139.500 546V570M1139.500 618V651" stroke="#3a96d8" fill="none" />
        <path d={joints.map(([x, y]) => `M${x - 1} ${y - 1}h3v3h-3z`).join("")} fill="#c80000" />
        <path d="M1136 580h5v1h-2v3h-1v-3h-2zM1137 606h4v1h-4z" fill="#e00000" />
        <g fontFamily="'DejaVu Sans',sans-serif" fontSize="7" fontWeight="bold">
          <text x="1143" y="532" fill="#d00000">Vdc</text>
          <text x="1143" y="661" fill="#d00000">Gnd</text>
          <text x="1109" y="597" fill="#d8c800">V1</text>
        </g>
        <path d="M1137 592h3v1h1v2h-1v1h-3v-1h2v-2h-2z" fill="#bbb" />
      </g>
    </svg>
  );
}

function Document() {
  return (
    <main className="flex min-w-0 flex-1 flex-col border-l border-[#a5a39e] bg-[#d4d0c8] pr-[4px] pb-[4px] pl-[2px]">
      <div role="tablist" className="flex h-[21px] shrink-0 items-end border-b border-[#a9a7a1]">
        <svg width="20" height="18" aria-hidden="true" className="ml-px">
          <path d="M0 18L17 1l3-1v18z" fill="#fff" />
          <path d="M0 18L17 1l3-.5" stroke="#8d8b86" fill="none" />
        </svg>
        <div className="flex h-[18px] items-center rounded-tr-[2px] border-t border-r border-[#8d8b86] bg-white pr-[4px]">
          <svg width="12" height="14" viewBox="0 0 12 14" aria-hidden="true">
            <path d="M1 .5h7l3 3v10H1z" fill="#a8b820" stroke="#4a5000" />
            <path d="M8 5H5v2.500h3V10H4" stroke="#fff" strokeWidth="1.300" fill="none" />
          </svg>
          <button type="button" role="tab" aria-selected className="mr-[6px] ml-[2px]">ring_9 ring:schematic</button>
          <button type="button" aria-label="Close document tab">
            <svg width="8" height="8" stroke="#222" strokeWidth="1.300" aria-hidden="true">
              <path d="M.5.5l7 7M7.500.5l-7 7" />
            </svg>
          </button>
        </div>
      </div>
      <div className="mt-[2px] min-h-0 flex-1 border border-t-2 border-t-[#77756f] border-l-[#77756f] border-r-white border-b-white">
        <Schematic />
      </div>
    </main>
  );
}

function StatusBar() {
  const cell = "flex h-[15px] items-center border border-t-[#c2bfb8] border-l-[#c2bfb8] border-r-[#e8e6e2] border-b-[#e8e6e2] pl-px";
  return (
    <footer className="flex h-[17px] shrink-0 items-end gap-[2px] border-t border-[#e8e6e2] bg-[#d4d0c8]">
      <span className={`${cell} flex-1`}>Ready</span>
      <span className={`${cell} w-[108px]`}>Select</span>
      <span className={`${cell} w-[72px]`} />
      <span className={`${cell} w-[45px]`} />
      <span className={`${cell} w-[24px] text-[#908e88]`}>CAP</span>
      <span className={`${cell} w-[26px] text-[#908e88]`}>NUM</span>
      <span className={`${cell} w-[23px] text-[#908e88]`}>INS</span>
    </footer>
  );
}

export default function App() {
  return (
    <div className="relative flex h-screen flex-col overflow-hidden bg-black">
      <ViewerTitle />
      <div className="absolute top-[23px] left-1/2 h-[2px] w-[326px] -translate-x-1/2 border-b border-[#777] bg-white" />
      <div className="flex min-h-0 flex-1 flex-col pr-[126px] pl-[125px]">
        <DesktopBar />
        <div className={`flex min-h-0 flex-1 flex-col overflow-hidden rounded-t-lg bg-linear-to-r from-[#d6d2ca] via-[#eae8e4] to-[#f6f4f3] text-black ${UI}`}>
          <div className="flex h-[33px] shrink-0 items-center border-b-2 border-[#aeaca8] bg-[#f3f3f3] px-[11px] font-['Noto_Sans',sans-serif] text-xs font-bold text-[#444]">
            <span className="w-[9px]" />
            <h2 className="flex-1 text-center">S-Edit 2021.2 - [ring_9 ring:schematic]</h2>
            <button type="button" aria-label="Close window">
              <svg width="9" height="9" stroke="#333" strokeWidth="2" aria-hidden="true">
                <path d="M1 1l7 7M8 1L1 8" />
              </svg>
            </button>
          </div>
          <MenuBar />
          <Toolbars />
          <div className="flex min-h-0 flex-1">
            <Dock />
            <div className="w-[5px] shrink-0 bg-[#e6e3de]" />
            <Document />
          </div>
          <StatusBar />
        </div>
      </div>
      <div className="pointer-events-none absolute right-[57px] bottom-[33px] w-[236px] font-['Open_Sans',sans-serif] text-white/50">
        <p className="text-[19px] leading-[26px]">Activate Windows</p>
        <p className="text-sm leading-[20px] whitespace-nowrap">Go to Settings to activate Windows.</p>
      </div>
    </div>
  );
}
